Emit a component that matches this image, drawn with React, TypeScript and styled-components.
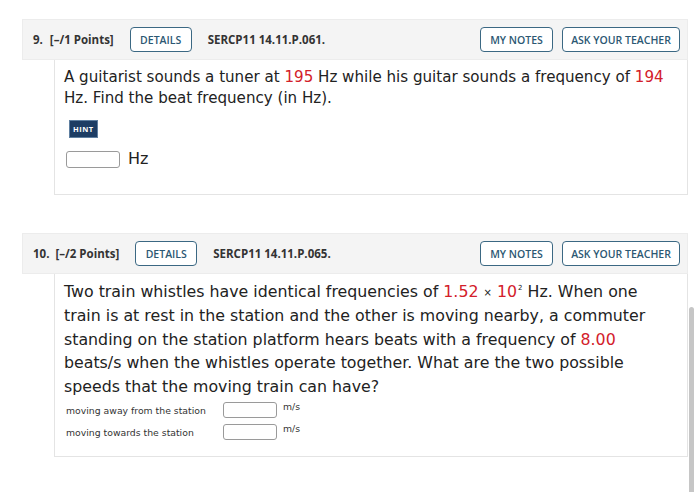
import styled, { createGlobalStyle } from "styled-components";

const GlobalStyle = createGlobalStyle`
  html, body {
    margin: 0;
    padding: 0;
    background: #ffffff;
  }
  body {
    font-family: "DejaVu Sans", Verdana, sans-serif;
    color: #222;
  }
`;

interface QuestionProps {
  num: string;
  points: string;
  code: string;
  pointsGap: number;
  pad: string;
  children: React.ReactNode;
}

const Question = ({ num, points, code, pointsGap, pad, children }: QuestionProps) => {
  return (
    <Panel>
      <Header>
        <Num>{num}</Num>
        <Points style={{ marginLeft: pointsGap }}>{points}</Points>
        <OutlineButton $w={62}>DETAILS</OutlineButton>
        <Code>{code}</Code>
        <Spacer />
        <OutlineButton $w={73}>MY NOTES</OutlineButton>
        <OutlineButton $w={118} $gap={9}>
          ASK YOUR TEACHER
        </OutlineButton>
      </Header>
      <Body $pad={pad}>{children}</Body>
    </Panel>
  );
};

export default function App() {
  return (
    <>
      <GlobalStyle />
      <Page>
        <Question
          num="9."
          points="[–/1 Points]"
          code="SERCP11 14.11.P.061."
          pointsGap={7}
          pad="7px 10px 26px 9px"
        >
          <Prompt $size={15.1} $lh={21}>
            A guitarist sounds a tuner at <Red>195</Red> Hz while his guitar sounds a
            frequency of <Red>194</Red> Hz. Find the beat frequency (in Hz).
          </Prompt>
          <Hint>HINT</Hint>
          <AnswerRow>
            <AnswerBox />
            <Unit>Hz</Unit>
          </AnswerRow>
        </Question>

        <Question
          num="10."
          points="[–/2 Points]"
          code="SERCP11 14.11.P.065."
          pointsGap={6}
          pad="3px 10px 16px 9px"
        >
          <Prompt $size={15.8} $lh={23.4}>
            Two train whistles have identical frequencies of <Red>1.52</Red>{" "}
            <Times>×</Times> <Red>10</Red>
            <Sup>2</Sup> Hz. When one train is at rest in the station and the other
            is moving nearby, a commuter standing on the station platform hears beats
            with a frequency of <Red>8.00</Red> beats/s when the whistles operate
            together. What are the two possible speeds that the moving train can have?
          </Prompt>
          <FieldGrid>
            <FieldLabel>moving away from the station</FieldLabel>
            <SmallBox />
            <SmallUnit>m/s</SmallUnit>
            <FieldLabel>moving towards the station</FieldLabel>
            <SmallBox />
            <SmallUnit>m/s</SmallUnit>
          </FieldGrid>
        </Question>
      </Page>
      <ScrollThumb />
    </>
  );
}

const Page = styled.div`
  width: 666px;
  padding: 19px 0 0 22px;
  display: flex;
  flex-direction: column;
  gap: 38px;
`;

const Panel = styled.div`
  display: flex;
  flex-direction: column;
`;

const Header = styled.div`
  height: 41px;
  box-sizing: border-box;
  background: #f4f4f4;
  border: 1px solid #ececec;
  display: flex;
  align-items: center;
  padding: 0 7px 0 10px;
  font-family: "Open Sans", sans-serif;
  font-weight: 700;
  font-size: 11.5px;
  color: #333;
`;

const Num = styled.span``;

const Points = styled.span`
  margin-right: 16px;
`;

const Code = styled.span`
  margin-left: 16px;
`;

const Spacer = styled.div`
  flex: 1;
`;

const OutlineButton = styled.div<{ $w: number; $gap?: number }>`
  width: ${(p) => p.$w}px;
  height: 25px;
  box-sizing: border-box;
  border: 1.5px solid #3b6883;
  border-radius: 4px;
  display: flex;
  align-items: center;
  justify-content: center;
  white-space: nowrap;
  font-family: "Open Sans", sans-serif;
  font-weight: 600;
  font-size: 10.5px;
  color: #2c5873;
  background: #fff;
  margin-left: ${(p) => p.$gap ?? 0}px;
`;

const Body = styled.div<{ $pad: string }>`
  margin-left: 32px;
  border: 1px solid #e4e4e4;
  border-top: none;
  padding: ${(p) => p.$pad};
`;

const Prompt = styled.div<{ $size: number; $lh: number }>`
  font-size: ${(p) => p.$size}px;
  line-height: ${(p) => p.$lh}px;
  color: #222;
`;

const Red = styled.span`
  color: #d3202a;
`;

const Times = styled.span`
  font-size: 10px;
  vertical-align: 1px;
`;

const Sup = styled.span`
  font-size: 7px;
  vertical-align: 7px;
  margin-left: 1px;
`;

const Hint = styled.div`
  display: inline-block;
  margin: 11px 0 0 5px;
  background: #1d3d64;
  color: #fff;
  font-family: "Open Sans", sans-serif;
  font-weight: 700;
  font-size: 7.5px;
  letter-spacing: 0.5px;
  padding: 3px 3px;
  border: 1px solid #5f7fa0;
`;

const AnswerRow = styled.div`
  display: flex;
  align-items: center;
  margin-top: 13px;
  margin-left: 2px;
  gap: 8px;
`;

const AnswerBox = styled.div`
  width: 54px;
  height: 17px;
  box-sizing: border-box;
  border: 1px solid #9a9a9a;
  border-radius: 3px;
  background: #fff;
`;

const Unit = styled.span`
  font-size: 16px;
  color: #222;
  margin-top: -2px;
`;

const FieldGrid = styled.div`
  display: grid;
  grid-template-columns: 151px 54px auto;
  column-gap: 6px;
  row-gap: 6px;
  align-items: center;
  margin: 4px 0 0 2px;
`;

const FieldLabel = styled.span`
  font-size: 9.3px;
  color: #333;
`;

const SmallBox = styled.div`
  width: 54px;
  height: 16px;
  box-sizing: border-box;
  border: 1px solid #9a9a9a;
  border-radius: 3px;
  background: #fff;
`;

const SmallUnit = styled.span`
  font-size: 9.3px;
  color: #333;
  align-self: start;
  margin-top: -1px;
`;

const ScrollThumb = styled.div`
  position: absolute;
  left: 689px;
  top: 307px;
  width: 5px;
  height: 190px;
  border-radius: 3px;
  background: #c6c6c6;
`;
